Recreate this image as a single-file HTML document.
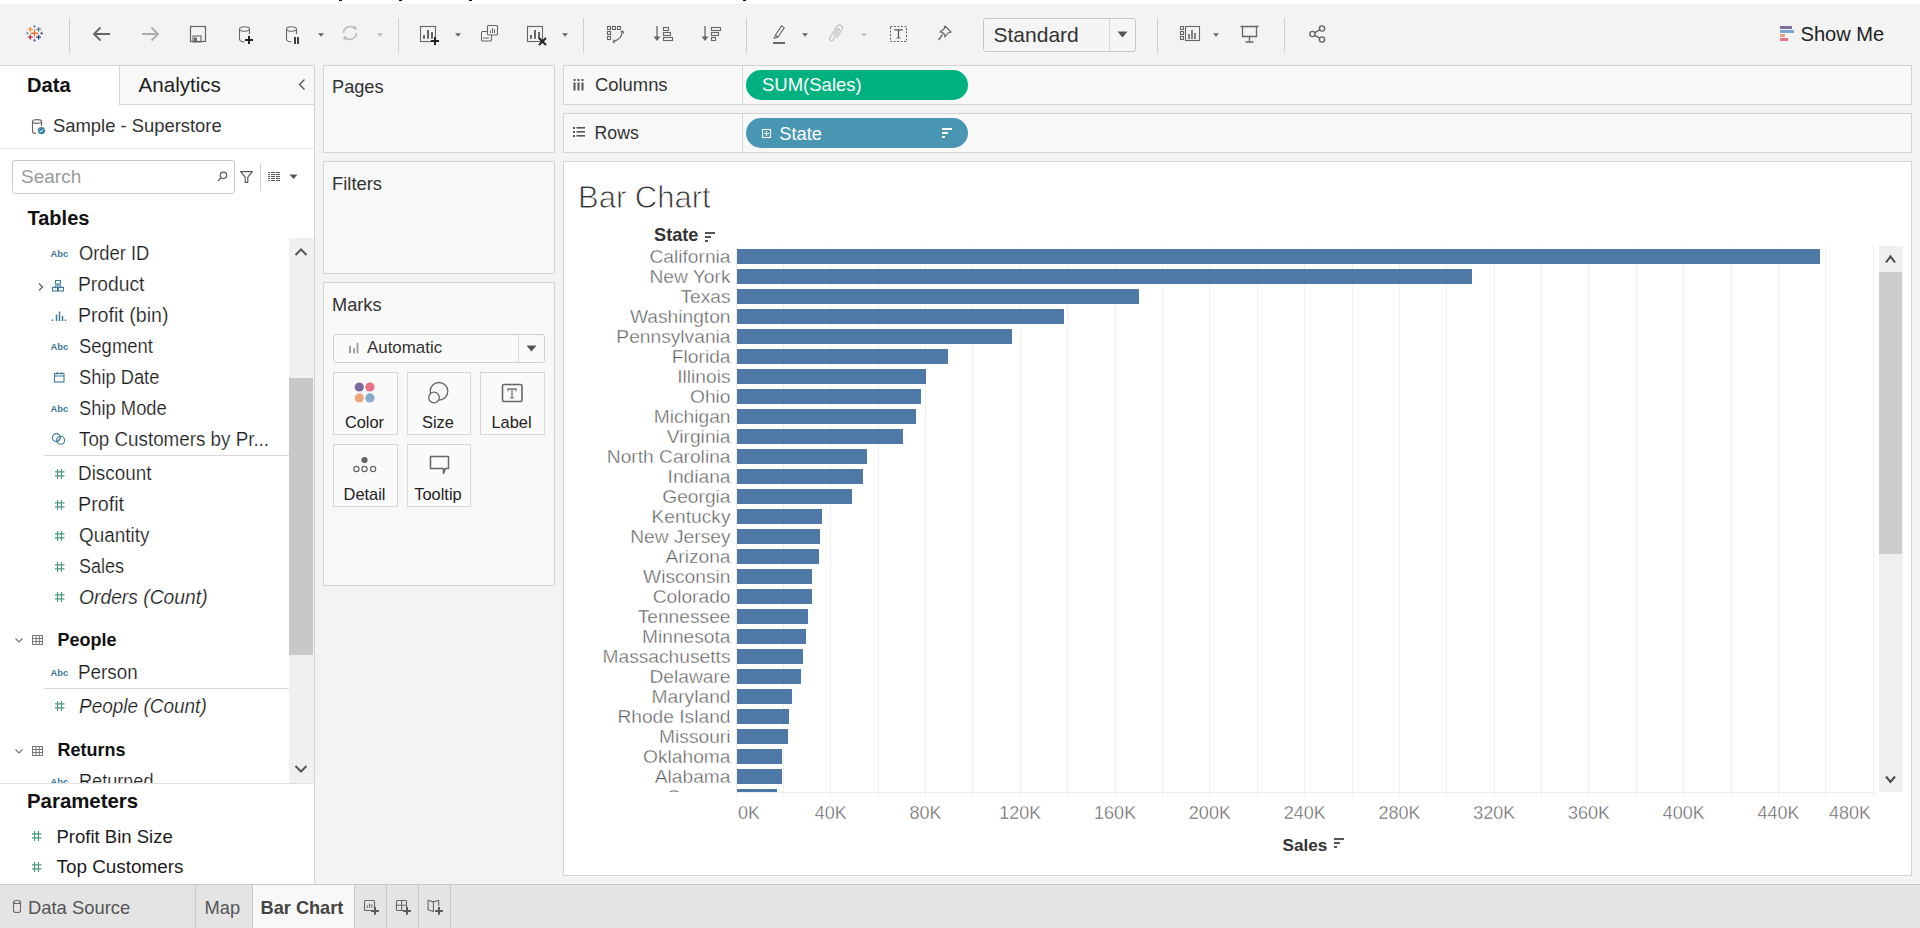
<!DOCTYPE html><html><head><meta charset="utf-8"><style>
html,body{margin:0;padding:0}
body{width:1920px;height:928px;position:relative;overflow:hidden;background:#f3f3f3;font-family:"Liberation Sans",sans-serif}
.t{position:absolute;white-space:nowrap;line-height:1;}
.r{position:absolute;box-sizing:border-box}
.s{position:absolute;overflow:visible}
</style></head><body>
<div class="r" style="left:0px;top:0px;width:1920px;height:4px;background:#fff"></div>
<div class="r" style="left:339px;top:0px;width:3px;height:1px;background:#111"></div>
<div class="r" style="left:399px;top:0px;width:3px;height:1px;background:#111"></div>
<div class="r" style="left:469px;top:0px;width:3px;height:1px;background:#111"></div>
<div class="r" style="left:743px;top:0px;width:3px;height:1px;background:#111"></div>
<div class="r" style="left:69px;top:18px;width:1px;height:35px;background:#cfcfcf"></div>
<div class="r" style="left:398px;top:18px;width:1px;height:35px;background:#cfcfcf"></div>
<div class="r" style="left:583px;top:18px;width:1px;height:35px;background:#cfcfcf"></div>
<div class="r" style="left:746px;top:18px;width:1px;height:35px;background:#cfcfcf"></div>
<div class="r" style="left:1157px;top:18px;width:1px;height:35px;background:#cfcfcf"></div>
<div class="r" style="left:1284px;top:18px;width:1px;height:35px;background:#cfcfcf"></div>
<svg class="s" style="left:0px;top:0px;" width="70" height="65" viewBox="0 0 70 65"><path d="M30.9 33.2H38.1M34.5 29.6V36.800000000000004" stroke="#e8762b" stroke-width="1.35"/><path d="M27.900000000000002 29.3H32.7M30.3 26.900000000000002V31.7" stroke="#f28e2b" stroke-width="1.2"/><path d="M36.2 29.3H41.0M38.6 26.900000000000002V31.7" stroke="#5b879b" stroke-width="1.2"/><path d="M27.900000000000002 37.2H32.7M30.3 34.800000000000004V39.6" stroke="#c72035" stroke-width="1.2"/><path d="M36.2 37.2H41.0M38.6 34.800000000000004V39.6" stroke="#1f447e" stroke-width="1.2"/><path d="M33.0 26.3H36.0M34.5 24.8V27.8" stroke="#7099a6" stroke-width="1.0"/><path d="M25.9 33.2H28.9M27.4 31.700000000000003V34.7" stroke="#7e9fb0" stroke-width="1.0"/><path d="M40.1 33.2H43.1M41.6 31.700000000000003V34.7" stroke="#59578e" stroke-width="1.0"/><path d="M33.0 40.3H36.0M34.5 38.8V41.8" stroke="#7c6f9a" stroke-width="1.0"/></svg>
<svg class="s" style="left:90px;top:24px;" width="24" height="20" viewBox="0 0 24 20"><path d="M4 10H20M10.5 3.5L4 10L10.5 16.5" fill="none" stroke="#666" stroke-width="1.8"/></svg>
<svg class="s" style="left:138px;top:24px;" width="24" height="20" viewBox="0 0 24 20"><path d="M4 10H20M13.5 3.5L20 10L13.5 16.5" fill="none" stroke="#aaa" stroke-width="1.8"/></svg>
<svg class="s" style="left:188px;top:24px;" width="20" height="20" viewBox="0 0 20 20"><rect x="2.5" y="2.5" width="15" height="15" fill="none" stroke="#666" stroke-width="1.2"/><rect x="5" y="12" width="8" height="6" fill="none" stroke="#666" stroke-width="1.1"/><rect x="6" y="13.6" width="3" height="4" fill="#666"/></svg>
<svg class="s" style="left:236px;top:22px;" width="24" height="24" viewBox="0 0 24 24"><path d="M3.5 7C3.5 4 13.5 4 13.5 7C13.5 10 3.5 10 3.5 7V17C3.5 19 6.5 20 8.5 20M13.5 7V12" fill="none" stroke="#666" stroke-width="1.1"/><path d="M9 18H17M13 14V22" stroke="#222" stroke-width="2"/></svg>
<svg class="s" style="left:283px;top:22px;" width="24" height="24" viewBox="0 0 24 24"><path d="M3.5 7C3.5 4 13.5 4 13.5 7C13.5 10 3.5 10 3.5 7V17C3.5 19 6.5 20 8.5 20M13.5 7V12" fill="none" stroke="#666" stroke-width="1.1"/><path d="M12 15V22M15 15V22" stroke="#222" stroke-width="1.7"/></svg>
<svg class="s" style="left:317.4px;top:32.2px;" width="8" height="6" viewBox="0 0 8 6"><path d="M1.0 1.2H7.0L4 4.8Z" fill="#666"/></svg>
<svg class="s" style="left:339px;top:22px;" width="22" height="22" viewBox="0 0 22 22"><path d="M4.5 11A6.5 6.5 0 0 1 16 7M17.5 11A6.5 6.5 0 0 1 6 15" fill="none" stroke="#bbb" stroke-width="1.4"/><path d="M13.5 4.5L17.5 4.5L17 8.5Z M8.5 17.5L4.5 17.5L5 13.5Z" fill="#bbb"/></svg>
<svg class="s" style="left:376.4px;top:32.2px;" width="8" height="6" viewBox="0 0 8 6"><path d="M1.0 1.2H7.0L4 4.8Z" fill="#bbb"/></svg>
<svg class="s" style="left:416px;top:22px;" width="26" height="26" viewBox="0 0 26 26"><rect x="4.5" y="4.5" width="15" height="15" fill="none" stroke="#666" stroke-width="1.1"/><path d="M8 16.7V13M12 16.7V8M16 16.7V10" stroke="#666" stroke-width="2"/><path d="M15 19H23M19 15V23" stroke="#222" stroke-width="2"/></svg>
<svg class="s" style="left:454.3px;top:32.2px;" width="8" height="6" viewBox="0 0 8 6"><path d="M1.0 1.2H7.0L4 4.8Z" fill="#666"/></svg>
<svg class="s" style="left:478px;top:20px;" width="24" height="24" viewBox="0 0 24 24"><rect x="3.5" y="11.5" width="10" height="9.5" rx="1" fill="none" stroke="#666" stroke-width="1.1"/><rect x="9.5" y="5.5" width="10" height="9.5" rx="1" fill="#f3f3f3" stroke="#666" stroke-width="1.1"/><path d="M12.5 13V10.5M14.5 13V8M16.5 13V9.5M6 19V17M8 19V17M10 19V17" stroke="#666" stroke-width="1"/></svg>
<svg class="s" style="left:523px;top:22px;" width="26" height="26" viewBox="0 0 26 26"><rect x="4.5" y="4.5" width="15" height="15" fill="none" stroke="#666" stroke-width="1.1"/><path d="M8 16.7V13M12 16.7V8M16 16.7V10" stroke="#666" stroke-width="2"/><path d="M16 16L23 23M23 16L16 23" stroke="#222" stroke-width="2"/></svg>
<svg class="s" style="left:561px;top:32.2px;" width="8" height="6" viewBox="0 0 8 6"><path d="M1.0 1.2H7.0L4 4.8Z" fill="#666"/></svg>
<svg class="s" style="left:604px;top:24px;" width="24" height="22" viewBox="0 0 24 22"><g fill="none" stroke="#666" stroke-width="1.1"><rect x="3.5" y="2.5" width="3" height="3"/><rect x="8.5" y="2.5" width="3" height="3"/><rect x="13.5" y="2.5" width="3" height="3"/><rect x="3.5" y="7.5" width="3" height="3"/><rect x="3.5" y="12.5" width="3" height="3"/><path d="M18 8C18 13 15 16 9 17.5"/></g><path d="M16 7L19.5 6.5L20 10Z M10 15L8.5 18L11 19.5Z" fill="#666"/></svg>
<svg class="s" style="left:652px;top:24px;" width="24" height="20" viewBox="0 0 24 20"><path d="M5 2V15" stroke="#666" stroke-width="1.3"/><path d="M1.5 12.5L5 17L8.5 12.5Z" fill="#666"/><g fill="none" stroke="#666" stroke-width="1.1"><rect x="11.5" y="3.5" width="5" height="3"/><rect x="11.5" y="8.5" width="7" height="3"/><rect x="11.5" y="13.5" width="9" height="3"/></g></svg>
<svg class="s" style="left:700px;top:24px;" width="24" height="20" viewBox="0 0 24 20"><path d="M5 2V15" stroke="#666" stroke-width="1.3"/><path d="M1.5 12.5L5 17L8.5 12.5Z" fill="#666"/><g fill="none" stroke="#666" stroke-width="1.1"><rect x="11.5" y="3.5" width="9" height="3"/><rect x="11.5" y="8.5" width="7" height="3"/><rect x="11.5" y="13.5" width="4" height="3"/></g></svg>
<svg class="s" style="left:770px;top:22px;" width="20" height="24" viewBox="0 0 20 24"><path d="M11.6 3.9L14.3 5.6L8 15L5.3 13.3Z" fill="none" stroke="#666" stroke-width="1.1" stroke-linejoin="round"/><path d="M5.3 13.3L4 16.5L8 15" fill="none" stroke="#666" stroke-width="1"/><path d="M3 21H15" stroke="#666" stroke-width="2"/></svg>
<svg class="s" style="left:800.5px;top:32.2px;" width="8" height="6" viewBox="0 0 8 6"><path d="M1.0 1.2H7.0L4 4.8Z" fill="#666"/></svg>
<svg class="s" style="left:827px;top:22px;" width="20" height="24" viewBox="0 0 20 24"><g transform="rotate(-58 9 11.5)" fill="none" stroke="#bdbdbd" stroke-width="1.1"><path d="M6 14.5H15.5A3 3 0 0 0 15.5 8.5H2.5A2 2 0 0 0 2.5 12.5H13.5A1 1 0 0 0 13.5 10.5H6"/></g></svg>
<svg class="s" style="left:860.3px;top:32.2px;" width="8" height="6" viewBox="0 0 8 6"><path d="M1.0 1.2H7.0L4 4.8Z" fill="#c0c0c0"/></svg>
<svg class="s" style="left:887px;top:23px;" width="24" height="22" viewBox="0 0 24 22"><rect x="3.5" y="3.5" width="16" height="15" fill="none" stroke="#666" stroke-width="1" stroke-dasharray="2 1.5"/><path d="M7.8 7.5V6.8H15.2V7.5M11.5 6.8V15M9.6 15H13.4" fill="none" stroke="#555" stroke-width="1.2"/></svg>
<svg class="s" style="left:935px;top:22px;" width="20" height="22" viewBox="0 0 20 22"><path d="M10 4L16 10L13 11L10 15L9.5 12.5L7.5 10.5L5 10L9 7Z" fill="none" stroke="#666" stroke-width="1.2" stroke-linejoin="round"/><path d="M7.5 12.5L3.5 18" stroke="#666" stroke-width="1.3"/></svg>
<div class="r" style="left:983px;top:18px;width:153px;height:34px;background:#f5f5f5;border:1px solid #c8c8c8;border-radius:3px"></div>
<div class="r" style="left:1109px;top:19px;width:1px;height:32px;background:#d8d8d8"></div>
<svg class="s" style="left:1116px;top:31px;" width="14" height="8" viewBox="0 0 14 8"><path d="M1.5 0.5H11.5L6.5 6.5Z" fill="#555"/></svg>
<div class="t" style="left:993.50px;top:24.22px;font-size:21px;color:#333;font-weight:400;font-style:normal;">Standard</div>
<svg class="s" style="left:1177px;top:24px;" width="26" height="20" viewBox="0 0 26 20"><g fill="none" stroke="#666" stroke-width="1.1"><rect x="3.5" y="2.5" width="3" height="3"/><rect x="3.5" y="7.5" width="3" height="3"/><rect x="3.5" y="12.5" width="3" height="3"/><rect x="8.5" y="2.5" width="14" height="14"/></g><path d="M12 15V10M15 15V6M18 15V9" stroke="#666" stroke-width="1.6"/></svg>
<svg class="s" style="left:1211.5px;top:32.2px;" width="8" height="6" viewBox="0 0 8 6"><path d="M1.0 1.2H7.0L4 4.8Z" fill="#666"/></svg>
<svg class="s" style="left:1238px;top:23px;" width="24" height="22" viewBox="0 0 24 22"><path d="M2.5 3.5H20.5M4.5 3.5V13.5H18.5V3.5M11.5 13.5V19M7.5 19H15.5" fill="none" stroke="#666" stroke-width="1.3"/></svg>
<svg class="s" style="left:1307px;top:23px;" width="22" height="22" viewBox="0 0 22 22"><g fill="none" stroke="#666" stroke-width="1.4"><circle cx="5.5" cy="11" r="2.6"/><circle cx="15" cy="5.5" r="2.6"/><circle cx="15" cy="16.5" r="2.6"/><path d="M7.8 9.6L12.7 6.9M7.8 12.4L12.7 15.1"/></g></svg>
<div class="r" style="left:1780px;top:26px;width:12px;height:3px;background:#7f6e9a"></div>
<div class="r" style="left:1780px;top:30px;width:14px;height:3px;background:#7aa6d0"></div>
<div class="r" style="left:1780px;top:34px;width:5px;height:3px;background:#eda27a"></div>
<div class="r" style="left:1780px;top:38px;width:8px;height:3px;background:#e9707f"></div>
<div class="t" style="left:1800.50px;top:24.29px;font-size:20.1px;color:#222;font-weight:400;font-style:normal;">Show Me</div>
<div class="r" style="left:0px;top:65px;width:315px;height:820px;background:#fff;border-top:1px solid #d4d4d4;border-right:1px solid #d4d4d4"></div>
<div class="r" style="left:119px;top:65px;width:196px;height:40px;background:#f8f8f8;border-left:1px solid #d4d4d4;border-bottom:1px solid #d4d4d4;border-top:1px solid #d4d4d4;border-right:1px solid #d4d4d4"></div>
<div class="t" style="left:27.00px;top:74.99px;font-size:20.1px;color:#111;font-weight:700;font-style:normal;">Data</div>
<div class="t" style="left:138.50px;top:74.56px;font-size:20.6px;color:#222;font-weight:400;font-style:normal;">Analytics</div>
<svg class="s" style="left:296px;top:78px;" width="12" height="14" viewBox="0 0 12 14"><path d="M8.5 1.5L3.5 6.5L8.5 11.5" fill="none" stroke="#555" stroke-width="1.4"/></svg>
<svg class="s" style="left:30px;top:117px;" width="20" height="20" viewBox="0 0 20 20"><path d="M2.5 4.5C2.5 2 11.5 2 11.5 4.5C11.5 7 2.5 7 2.5 4.5V14.5C2.5 16 4 16.5 6 16.5M11.5 4.5V9" fill="none" stroke="#666" stroke-width="1.1"/><circle cx="11.5" cy="13.6" r="3.7" fill="#3e86a8"/><path d="M9.7 13.6L11 14.9L13.4 12.4" fill="none" stroke="#fff" stroke-width="1"/></svg>
<div class="t" style="left:53.00px;top:116.82px;font-size:18.4px;color:#333;font-weight:400;font-style:normal;">Sample - Superstore</div>
<div class="r" style="left:0px;top:148px;width:314px;height:1px;background:#e6e6e6"></div>
<div class="r" style="left:12px;top:160px;width:223px;height:34px;background:#fff;border:1px solid #c9c9c9;border-radius:3px"></div>
<div class="t" style="left:21.00px;top:166.92px;font-size:19px;color:#9a9a9a;font-weight:400;font-style:normal;">Search</div>
<svg class="s" style="left:214px;top:170px;" width="16" height="16" viewBox="0 0 16 16"><circle cx="9.4" cy="5.3" r="3.2" fill="none" stroke="#555" stroke-width="1.2"/><path d="M7.2 7.6L4.2 10.6" stroke="#555" stroke-width="1.3" stroke-linecap="round"/></svg>
<svg class="s" style="left:238px;top:168px;" width="18" height="18" viewBox="0 0 18 18"><path d="M2.6 3.6H14.4L9.8 9.2V14.4H7.2V9.2Z" fill="none" stroke="#555" stroke-width="1.1" stroke-linejoin="round"/></svg>
<div class="r" style="left:260px;top:163px;width:1px;height:28px;background:#d4d4d4"></div>
<svg class="s" style="left:266px;top:170px;" width="18" height="14" viewBox="0 0 18 14"><g fill="#5a5a5a"><rect x="2" y="2" width="2" height="1"/><rect x="5" y="2" width="4" height="1"/><rect x="10" y="2" width="4" height="1"/><rect x="2" y="4" width="2" height="1"/><rect x="5" y="4" width="4" height="1"/><rect x="10" y="4" width="4" height="1"/><rect x="2" y="6" width="2" height="1"/><rect x="5" y="6" width="4" height="1"/><rect x="10" y="6" width="4" height="1"/><rect x="2" y="8" width="2" height="1"/><rect x="5" y="8" width="4" height="1"/><rect x="10" y="8" width="4" height="1"/><rect x="2" y="10" width="2" height="1"/><rect x="5" y="10" width="4" height="1"/><rect x="10" y="10" width="4" height="1"/></g></svg>
<svg class="s" style="left:289px;top:174px;" width="10" height="6" viewBox="0 0 10 6"><path d="M0.5 0.5H8.5L4.5 5Z" fill="#555"/></svg>
<div class="t" style="left:27.50px;top:208.07px;font-size:20px;color:#111;font-weight:700;font-style:normal;">Tables</div>
<div style="position:absolute;left:0;top:238px;width:289px;height:545px;overflow:hidden">
<div class="t" style="left:50.5px;top:11.04px;font-size:9.4px;font-weight:700;color:#3f7b99">Abc</div>
<div class="t" style="left:78.87px;top:6.09px;font-size:19.5px;color:#1c1c1c;font-style:normal;transform:scaleX(0.9405);transform-origin:0 0;-webkit-text-stroke:0.2px #fff">Order ID</div>
<svg class="s" style="left:36px;top:41.69999999999999px;" width="30" height="14" viewBox="0 0 30 14"><path d="M3 3.5L6.5 7L3 10.5" fill="none" stroke="#666" stroke-width="1.3"/><g fill="none" stroke="#3f7b99" stroke-width="1.1"><rect x="19.5" y="0.5" width="5" height="3.5"/><rect x="16.5" y="7.5" width="5" height="3.5"/><rect x="22.5" y="7.5" width="5" height="3.5"/><path d="M22 4V6H19V7.5M22 6H25V7.5"/></g></svg>
<div class="t" style="left:78.16px;top:37.09px;font-size:19.5px;color:#1c1c1c;font-style:normal;transform:scaleX(0.9877);transform-origin:0 0;-webkit-text-stroke:0.2px #fff">Product</div>
<svg class="s" style="left:50px;top:71.69999999999999px;" width="18" height="12" viewBox="0 0 18 12"><path d="M2.5 11V9.5M6.5 11V4.5M9.5 11V1.5M12.5 11V6M15.5 11V9.5" stroke="#3f7b99" stroke-width="1.5"/></svg>
<div class="t" style="left:78.13px;top:68.09px;font-size:19.5px;color:#1c1c1c;font-style:normal;transform:scaleX(1.0062);transform-origin:0 0;-webkit-text-stroke:0.2px #fff">Profit (bin)</div>
<div class="t" style="left:50.5px;top:104.04px;font-size:9.4px;font-weight:700;color:#3f7b99">Abc</div>
<div class="t" style="left:78.87px;top:99.09px;font-size:19.5px;color:#1c1c1c;font-style:normal;transform:scaleX(0.9477);transform-origin:0 0;-webkit-text-stroke:0.2px #fff">Segment</div>
<svg class="s" style="left:52px;top:132.7px;" width="14" height="12" viewBox="0 0 14 12"><rect x="2.5" y="2.5" width="9.5" height="8.5" fill="none" stroke="#3f7b99" stroke-width="1.1"/><path d="M2.5 5H12M5 1V3.5M9.5 1V3.5" stroke="#3f7b99" stroke-width="1.1"/></svg>
<div class="t" style="left:78.88px;top:130.09px;font-size:19.5px;color:#1c1c1c;font-style:normal;transform:scaleX(0.9385);transform-origin:0 0;-webkit-text-stroke:0.2px #fff">Ship Date</div>
<div class="t" style="left:50.5px;top:166.04px;font-size:9.4px;font-weight:700;color:#3f7b99">Abc</div>
<div class="t" style="left:78.87px;top:161.09px;font-size:19.5px;color:#1c1c1c;font-style:normal;transform:scaleX(0.9415);transform-origin:0 0;-webkit-text-stroke:0.2px #fff">Ship Mode</div>
<svg class="s" style="left:50px;top:193.7px;" width="16" height="14" viewBox="0 0 16 14"><circle cx="6.4" cy="5.6" r="4" fill="none" stroke="#3f7b99" stroke-width="1.1"/><circle cx="10.6" cy="8.3" r="4" fill="none" stroke="#3f7b99" stroke-width="1.1"/><path d="M7.5 9.5L10 5.5" stroke="#3f7b99" stroke-width="1.6" opacity=".5"/></svg>
<div class="t" style="left:79.23px;top:192.09px;font-size:19.5px;color:#1c1c1c;font-style:normal;transform:scaleX(0.9636);transform-origin:0 0;-webkit-text-stroke:0.2px #fff">Top Customers by Pr...</div>
<div class="r" style="left:44px;top:217px;width:245px;height:1px;background:#d9d9d9"></div>
<svg class="s" style="left:53.5px;top:229.60000000000002px;" width="12" height="12" viewBox="0 0 12 12"><path d="M3.6 1V11M7.4 1V11M1 3.8H10.5M1 7.8H10.5" stroke="#4b9a7c" stroke-width="1.15"/></svg>
<div class="t" style="left:78.19px;top:226.49px;font-size:19.5px;color:#1c1c1c;font-style:normal;transform:scaleX(0.9677);transform-origin:0 0;-webkit-text-stroke:0.2px #fff">Discount</div>
<svg class="s" style="left:53.5px;top:260.5px;" width="12" height="12" viewBox="0 0 12 12"><path d="M3.6 1V11M7.4 1V11M1 3.8H10.5M1 7.8H10.5" stroke="#4b9a7c" stroke-width="1.15"/></svg>
<div class="t" style="left:78.12px;top:257.39px;font-size:19.5px;color:#1c1c1c;font-style:normal;transform:scaleX(1.0118);transform-origin:0 0;-webkit-text-stroke:0.2px #fff">Profit</div>
<svg class="s" style="left:53.5px;top:291.5px;" width="12" height="12" viewBox="0 0 12 12"><path d="M3.6 1V11M7.4 1V11M1 3.8H10.5M1 7.8H10.5" stroke="#4b9a7c" stroke-width="1.15"/></svg>
<div class="t" style="left:78.85px;top:288.39px;font-size:19.5px;color:#1c1c1c;font-style:normal;transform:scaleX(0.9697);transform-origin:0 0;-webkit-text-stroke:0.2px #fff">Quantity</div>
<svg class="s" style="left:53.5px;top:322.5px;" width="12" height="12" viewBox="0 0 12 12"><path d="M3.6 1V11M7.4 1V11M1 3.8H10.5M1 7.8H10.5" stroke="#4b9a7c" stroke-width="1.15"/></svg>
<div class="t" style="left:78.89px;top:319.39px;font-size:19.5px;color:#1c1c1c;font-style:normal;transform:scaleX(0.9221);transform-origin:0 0;-webkit-text-stroke:0.2px #fff">Sales</div>
<svg class="s" style="left:53.5px;top:353.1px;" width="12" height="12" viewBox="0 0 12 12"><path d="M3.6 1V11M7.4 1V11M1 3.8H10.5M1 7.8H10.5" stroke="#4b9a7c" stroke-width="1.15"/></svg>
<div class="t" style="left:78.64px;top:349.99px;font-size:19.5px;color:#1c1c1c;font-style:italic;transform:scaleX(0.9887);transform-origin:0 0;-webkit-text-stroke:0.2px #fff">Orders (Count)</div>
<svg class="s" style="left:12px;top:396.4px;" width="34" height="14" viewBox="0 0 34 14"><path d="M3.5 4.5L7 8L10.5 4.5" fill="none" stroke="#777" stroke-width="1.2"/><g fill="none" stroke="#777" stroke-width="1"><rect x="20.5" y="1.5" width="10" height="9"/><path d="M20.5 4.5H30.5M20.5 7.5H30.5M24 1.5V10.5M27.3 1.5V10.5"/></g></svg>
<div class="t" style="left:57.5px;top:393.16px;font-size:18px;color:#111;font-weight:700">People</div>
<div class="t" style="left:50.5px;top:430.04px;font-size:9.4px;font-weight:700;color:#3f7b99">Abc</div>
<div class="t" style="left:78.19px;top:425.19px;font-size:19.5px;color:#1c1c1c;font-style:normal;transform:scaleX(0.9662);transform-origin:0 0;-webkit-text-stroke:0.2px #fff">Person</div>
<div class="r" style="left:44px;top:450px;width:245px;height:1px;background:#d9d9d9"></div>
<svg class="s" style="left:53.5px;top:462.20000000000005px;" width="12" height="12" viewBox="0 0 12 12"><path d="M3.6 1V11M7.4 1V11M1 3.8H10.5M1 7.8H10.5" stroke="#4b9a7c" stroke-width="1.15"/></svg>
<div class="t" style="left:79.13px;top:459.09px;font-size:19.5px;color:#1c1c1c;font-style:italic;transform:scaleX(0.9738);transform-origin:0 0;-webkit-text-stroke:0.2px #fff">People (Count)</div>
<svg class="s" style="left:12px;top:506.5px;" width="34" height="14" viewBox="0 0 34 14"><path d="M3.5 4.5L7 8L10.5 4.5" fill="none" stroke="#777" stroke-width="1.2"/><g fill="none" stroke="#777" stroke-width="1"><rect x="20.5" y="1.5" width="10" height="9"/><path d="M20.5 4.5H30.5M20.5 7.5H30.5M24 1.5V10.5M27.3 1.5V10.5"/></g></svg>
<div class="t" style="left:57.5px;top:503.26px;font-size:18px;color:#111;font-weight:700">Returns</div>
<div class="t" style="left:50.5px;top:539.04px;font-size:9.4px;font-weight:700;color:#3f7b99">Abc</div>
<div class="t" style="left:78.7px;top:533.89px;font-size:19.5px;color:#1c1c1c;font-style:normal;transform:scaleX(0.9282);transform-origin:0 0;-webkit-text-stroke:0.2px #fff">Returned</div>
</div>
<div class="r" style="left:289px;top:238px;width:25px;height:545px;background:#f0f0f0"></div>
<div class="r" style="left:289px;top:378px;width:24px;height:277px;background:#c8c8c8"></div>
<svg class="s" style="left:292px;top:246px;" width="18" height="12" viewBox="0 0 18 12"><path d="M3.5 9L9 3.5L14.5 9" fill="none" stroke="#555" stroke-width="2"/></svg>
<svg class="s" style="left:292px;top:763px;" width="18" height="12" viewBox="0 0 18 12"><path d="M3.5 3L9 8.5L14.5 3" fill="none" stroke="#555" stroke-width="2"/></svg>
<div class="r" style="left:0px;top:783px;width:314px;height:1px;background:#e0e0e0"></div>
<div class="t" style="left:27.00px;top:791.23px;font-size:20.4px;color:#111;font-weight:700;font-style:normal;">Parameters</div>
<svg class="s" style="left:30px;top:829px;" width="14" height="14" viewBox="0 0 14 14"><path d="M4.6 2V12M8.4 2V12M2 4.8H11.5M2 8.8H11.5" stroke="#4b9a7c" stroke-width="1.15"/></svg>
<div class="t" style="left:56.50px;top:827.84px;font-size:18.5px;color:#1c1c1c;font-weight:400;font-style:normal;">Profit Bin Size</div>
<svg class="s" style="left:30px;top:860px;" width="14" height="14" viewBox="0 0 14 14"><path d="M4.6 2V12M8.4 2V12M2 4.8H11.5M2 8.8H11.5" stroke="#4b9a7c" stroke-width="1.15"/></svg>
<div class="t" style="left:56.50px;top:858.00px;font-size:18.9px;color:#1c1c1c;font-weight:400;font-style:normal;">Top Customers</div>
<div class="r" style="left:323px;top:65px;width:232px;height:88px;background:#f8f8f8;border:1px solid #d4d4d4"></div>
<div class="t" style="left:332.00px;top:78.39px;font-size:18.2px;color:#333;font-weight:400;font-style:normal;">Pages</div>
<div class="r" style="left:323px;top:161px;width:232px;height:113px;background:#f8f8f8;border:1px solid #d4d4d4"></div>
<div class="t" style="left:332.00px;top:174.72px;font-size:18.4px;color:#333;font-weight:400;font-style:normal;">Filters</div>
<div class="r" style="left:323px;top:282px;width:232px;height:304px;background:#f8f8f8;border:1px solid #d4d4d4"></div>
<div class="t" style="left:332.00px;top:295.79px;font-size:18.2px;color:#333;font-weight:400;font-style:normal;">Marks</div>
<div class="r" style="left:333px;top:334px;width:212px;height:29px;background:#fafafa;border:1px solid #cfcfcf;border-radius:3px"></div>
<div class="r" style="left:518px;top:335px;width:1px;height:27px;background:#dcdcdc"></div>
<svg class="s" style="left:525px;top:345px;" width="14" height="8" viewBox="0 0 14 8"><path d="M1.5 0.5H11.5L6.5 6.5Z" fill="#555"/></svg>
<svg class="s" style="left:346px;top:340px;" width="16" height="16" viewBox="0 0 16 16"><path d="M4 12.5V6.5M8 12.5V9M11.5 12.5V3.8" stroke="#a0a0a0" stroke-width="2" stroke-linecap="round"/></svg>
<div class="t" style="left:367.00px;top:339.79px;font-size:16.9px;color:#333;font-weight:400;font-style:normal;">Automatic</div>
<div class="r" style="left:333px;top:372px;width:65px;height:63px;background:#fafafa;border:1px solid #d6d6d6"></div>
<div class="t" style="left:164.50px;width:400px;text-align:center;top:413.62px;font-size:16.4px;color:#222;font-weight:400;font-style:normal;">Color</div>
<svg class="s" style="left:333px;top:372px;" width="65" height="40" viewBox="0 0 65 40"><circle cx="26.3" cy="15" r="4.6" fill="#7b6b9d"/><circle cx="36.9" cy="15" r="4.6" fill="#eb6f80"/><circle cx="26.3" cy="25.9" r="4.6" fill="#eea57b"/><circle cx="36.9" cy="25.9" r="4.6" fill="#86a9cd"/></svg>
<div class="r" style="left:407px;top:372px;width:64px;height:63px;background:#fafafa;border:1px solid #d6d6d6"></div>
<div class="t" style="left:238.00px;width:400px;text-align:center;top:413.62px;font-size:16.4px;color:#222;font-weight:400;font-style:normal;">Size</div>
<svg class="s" style="left:407px;top:372px;" width="65" height="40" viewBox="0 0 65 40"><circle cx="32" cy="19.3" r="8.8" fill="none" stroke="#666" stroke-width="1.3"/><circle cx="27" cy="25.5" r="5.3" fill="#fafafa" stroke="#666" stroke-width="1.3"/></svg>
<div class="r" style="left:480px;top:372px;width:65px;height:63px;background:#fafafa;border:1px solid #d6d6d6"></div>
<div class="t" style="left:311.50px;width:400px;text-align:center;top:413.62px;font-size:16.4px;color:#222;font-weight:400;font-style:normal;">Label</div>
<svg class="s" style="left:480px;top:372px;" width="65" height="40" viewBox="0 0 65 40"><rect x="22.5" y="12.5" width="19.5" height="17" rx="1.5" fill="none" stroke="#666" stroke-width="1.6"/><path d="M28 19.2V17H36V19.2M32 17V25.8M30.2 25.8H33.8" fill="none" stroke="#7a7a7a" stroke-width="1.3"/></svg>
<div class="r" style="left:333px;top:444px;width:65px;height:63px;background:#fafafa;border:1px solid #d6d6d6"></div>
<div class="t" style="left:164.50px;width:400px;text-align:center;top:485.62px;font-size:16.4px;color:#222;font-weight:400;font-style:normal;">Detail</div>
<svg class="s" style="left:333px;top:444px;" width="65" height="40" viewBox="0 0 65 40"><circle cx="31.5" cy="16" r="3.1" fill="#666"/><g fill="none" stroke="#666" stroke-width="1.2"><circle cx="23.4" cy="25" r="2.6"/><circle cx="31.5" cy="25" r="2.6"/><circle cx="40.1" cy="25" r="2.6"/></g></svg>
<div class="r" style="left:407px;top:444px;width:64px;height:63px;background:#fafafa;border:1px solid #d6d6d6"></div>
<div class="t" style="left:238.00px;width:400px;text-align:center;top:485.62px;font-size:16.4px;color:#222;font-weight:400;font-style:normal;">Tooltip</div>
<svg class="s" style="left:407px;top:444px;" width="65" height="40" viewBox="0 0 65 40"><path d="M23.5 12.5H41.5V24.5H38.5L36.5 29.5V24.5H23.5Z" fill="none" stroke="#666" stroke-width="1.5" stroke-linejoin="round"/></svg>
<div class="r" style="left:563px;top:65px;width:1349px;height:40px;background:#f8f8f8;border:1px solid #d4d4d4"></div>
<div class="r" style="left:742px;top:66px;width:1px;height:38px;background:#d4d4d4"></div>
<svg class="s" style="left:570px;top:76px;" width="18" height="18" viewBox="0 0 18 18"><g fill="#555"><rect x="3.5" y="3" width="2" height="2"/><rect x="7.5" y="3" width="2" height="2"/><rect x="11.5" y="3" width="2" height="2"/><rect x="3.5" y="6.5" width="2" height="8"/><rect x="7.5" y="6.5" width="2" height="8"/><rect x="11.5" y="6.5" width="2" height="8"/></g></svg>
<div class="t" style="left:595.00px;top:76.42px;font-size:18.4px;color:#333;font-weight:400;font-style:normal;">Columns</div>
<div class="r" style="left:746px;top:70px;width:222px;height:30px;background:#00b180;border-radius:15px"></div>
<div class="t" style="left:762.00px;top:76.34px;font-size:18.5px;color:#fff;font-weight:400;font-style:normal;">SUM(Sales)</div>
<div class="r" style="left:563px;top:113px;width:1349px;height:40px;background:#f8f8f8;border:1px solid #d4d4d4"></div>
<div class="r" style="left:742px;top:114px;width:1px;height:38px;background:#d4d4d4"></div>
<svg class="s" style="left:570px;top:124px;" width="18" height="18" viewBox="0 0 18 18"><g fill="#555"><rect x="3" y="3" width="2" height="2"/><rect x="3" y="7" width="2" height="2"/><rect x="3" y="11" width="2" height="2"/><rect x="6.5" y="3" width="8.5" height="1.6"/><rect x="6.5" y="7" width="8.5" height="1.6"/><rect x="6.5" y="11" width="8.5" height="1.6"/></g></svg>
<div class="t" style="left:594.60px;top:125.12px;font-size:17.7px;color:#333;font-weight:400;font-style:normal;">Rows</div>
<div class="r" style="left:746px;top:118px;width:222px;height:30px;background:#4996b2;border-radius:15px"></div>
<svg class="s" style="left:758px;top:125px;" width="16" height="16" viewBox="0 0 16 16"><rect x="4.5" y="4.5" width="8" height="8" fill="none" stroke="#fff" stroke-width="1.1"/><path d="M8.5 6V11M6 8.5H11" stroke="#fff" stroke-width="1.1"/></svg>
<div class="t" style="left:779.30px;top:124.61px;font-size:18.3px;color:#fff;font-weight:400;font-style:normal;">State</div>
<div class="r" style="left:942px;top:128px;width:10px;height:2px;background:#fff"></div>
<div class="r" style="left:942px;top:132px;width:6px;height:2px;background:#fff"></div>
<div class="r" style="left:942px;top:136px;width:3px;height:2px;background:#fff"></div>
<div class="r" style="left:563px;top:161px;width:1349px;height:715px;background:#fff;border:1px solid #d4d4d4"></div>
<div class="t" style="left:578.00px;top:181.76px;font-size:31px;color:#333;font-weight:300;font-style:normal;-webkit-text-stroke:0.8px #fff;">Bar Chart</div>
<div class="t" style="left:654.00px;top:225.79px;font-size:18.2px;color:#333;font-weight:700;font-style:normal;">State</div>
<div class="r" style="left:705px;top:232px;width:10px;height:2px;background:#555"></div>
<div class="r" style="left:705px;top:236px;width:6px;height:2px;background:#555"></div>
<div class="r" style="left:705px;top:240px;width:3px;height:2px;background:#555"></div>
<div style="position:absolute;left:570px;top:246px;width:1305px;height:546px;overflow:hidden">
<div class="r" style="left:166px;top:0;width:1px;height:546px;background:#f0f0f0"></div>
<div class="r" style="left:213px;top:0;width:1px;height:546px;background:#f0f0f0"></div>
<div class="r" style="left:260px;top:0;width:1px;height:546px;background:#f0f0f0"></div>
<div class="r" style="left:308px;top:0;width:1px;height:546px;background:#f0f0f0"></div>
<div class="r" style="left:355px;top:0;width:1px;height:546px;background:#f0f0f0"></div>
<div class="r" style="left:402px;top:0;width:1px;height:546px;background:#f0f0f0"></div>
<div class="r" style="left:450px;top:0;width:1px;height:546px;background:#f0f0f0"></div>
<div class="r" style="left:497px;top:0;width:1px;height:546px;background:#f0f0f0"></div>
<div class="r" style="left:545px;top:0;width:1px;height:546px;background:#f0f0f0"></div>
<div class="r" style="left:592px;top:0;width:1px;height:546px;background:#f0f0f0"></div>
<div class="r" style="left:639px;top:0;width:1px;height:546px;background:#f0f0f0"></div>
<div class="r" style="left:687px;top:0;width:1px;height:546px;background:#f0f0f0"></div>
<div class="r" style="left:734px;top:0;width:1px;height:546px;background:#f0f0f0"></div>
<div class="r" style="left:782px;top:0;width:1px;height:546px;background:#f0f0f0"></div>
<div class="r" style="left:829px;top:0;width:1px;height:546px;background:#f0f0f0"></div>
<div class="r" style="left:876px;top:0;width:1px;height:546px;background:#f0f0f0"></div>
<div class="r" style="left:924px;top:0;width:1px;height:546px;background:#f0f0f0"></div>
<div class="r" style="left:971px;top:0;width:1px;height:546px;background:#f0f0f0"></div>
<div class="r" style="left:1018px;top:0;width:1px;height:546px;background:#f0f0f0"></div>
<div class="r" style="left:1066px;top:0;width:1px;height:546px;background:#f0f0f0"></div>
<div class="r" style="left:1113px;top:0;width:1px;height:546px;background:#f0f0f0"></div>
<div class="r" style="left:1161px;top:0;width:1px;height:546px;background:#f0f0f0"></div>
<div class="r" style="left:1208px;top:0;width:1px;height:546px;background:#f0f0f0"></div>
<div class="r" style="left:1255px;top:0;width:1px;height:546px;background:#f0f0f0"></div>
<div class="r" style="left:1303px;top:0;width:1px;height:546px;background:#f0f0f0"></div>
<div class="r" style="left:167px;top:3px;width:1082.9px;height:15px;background:#4e79a7"></div>
<div class="t" style="left:-139.5px;width:300px;text-align:right;top:0.55px;font-size:19.2px;color:#5c5c5c;-webkit-text-stroke:0.4px #fff">California</div>
<div class="r" style="left:167px;top:23px;width:735.1px;height:15px;background:#4e79a7"></div>
<div class="t" style="left:-139.5px;width:300px;text-align:right;top:20.55px;font-size:19.2px;color:#5c5c5c;-webkit-text-stroke:0.4px #fff">New York</div>
<div class="r" style="left:167px;top:43px;width:401.8px;height:15px;background:#4e79a7"></div>
<div class="t" style="left:-139.5px;width:300px;text-align:right;top:40.55px;font-size:19.2px;color:#5c5c5c;-webkit-text-stroke:0.4px #fff">Texas</div>
<div class="r" style="left:167px;top:63px;width:327.0px;height:15px;background:#4e79a7"></div>
<div class="t" style="left:-139.5px;width:300px;text-align:right;top:60.55px;font-size:19.2px;color:#5c5c5c;-webkit-text-stroke:0.4px #fff">Washington</div>
<div class="r" style="left:167px;top:83px;width:274.6px;height:15px;background:#4e79a7"></div>
<div class="t" style="left:-139.5px;width:300px;text-align:right;top:80.55px;font-size:19.2px;color:#5c5c5c;-webkit-text-stroke:0.4px #fff">Pennsylvania</div>
<div class="r" style="left:167px;top:103px;width:210.6px;height:15px;background:#4e79a7"></div>
<div class="t" style="left:-139.5px;width:300px;text-align:right;top:100.55px;font-size:19.2px;color:#5c5c5c;-webkit-text-stroke:0.4px #fff">Florida</div>
<div class="r" style="left:167px;top:123px;width:188.5px;height:15px;background:#4e79a7"></div>
<div class="t" style="left:-139.5px;width:300px;text-align:right;top:120.55px;font-size:19.2px;color:#5c5c5c;-webkit-text-stroke:0.4px #fff">Illinois</div>
<div class="r" style="left:167px;top:143px;width:184.0px;height:15px;background:#4e79a7"></div>
<div class="t" style="left:-139.5px;width:300px;text-align:right;top:140.55px;font-size:19.2px;color:#5c5c5c;-webkit-text-stroke:0.4px #fff">Ohio</div>
<div class="r" style="left:167px;top:163px;width:179.3px;height:15px;background:#4e79a7"></div>
<div class="t" style="left:-139.5px;width:300px;text-align:right;top:160.55px;font-size:19.2px;color:#5c5c5c;-webkit-text-stroke:0.4px #fff">Michigan</div>
<div class="r" style="left:167px;top:183px;width:165.9px;height:15px;background:#4e79a7"></div>
<div class="t" style="left:-139.5px;width:300px;text-align:right;top:180.55px;font-size:19.2px;color:#5c5c5c;-webkit-text-stroke:0.4px #fff">Virginia</div>
<div class="r" style="left:167px;top:203px;width:130.3px;height:15px;background:#4e79a7"></div>
<div class="t" style="left:-139.5px;width:300px;text-align:right;top:200.55px;font-size:19.2px;color:#5c5c5c;-webkit-text-stroke:0.4px #fff">North Carolina</div>
<div class="r" style="left:167px;top:223px;width:125.5px;height:15px;background:#4e79a7"></div>
<div class="t" style="left:-139.5px;width:300px;text-align:right;top:220.55px;font-size:19.2px;color:#5c5c5c;-webkit-text-stroke:0.4px #fff">Indiana</div>
<div class="r" style="left:167px;top:243px;width:114.9px;height:15px;background:#4e79a7"></div>
<div class="t" style="left:-139.5px;width:300px;text-align:right;top:240.55px;font-size:19.2px;color:#5c5c5c;-webkit-text-stroke:0.4px #fff">Georgia</div>
<div class="r" style="left:167px;top:263px;width:85.3px;height:15px;background:#4e79a7"></div>
<div class="t" style="left:-139.5px;width:300px;text-align:right;top:260.55px;font-size:19.2px;color:#5c5c5c;-webkit-text-stroke:0.4px #fff">Kentucky</div>
<div class="r" style="left:167px;top:283px;width:83.3px;height:15px;background:#4e79a7"></div>
<div class="t" style="left:-139.5px;width:300px;text-align:right;top:280.55px;font-size:19.2px;color:#5c5c5c;-webkit-text-stroke:0.4px #fff">New Jersey</div>
<div class="r" style="left:167px;top:303px;width:82.2px;height:15px;background:#4e79a7"></div>
<div class="t" style="left:-139.5px;width:300px;text-align:right;top:300.55px;font-size:19.2px;color:#5c5c5c;-webkit-text-stroke:0.4px #fff">Arizona</div>
<div class="r" style="left:167px;top:323px;width:74.7px;height:15px;background:#4e79a7"></div>
<div class="t" style="left:-139.5px;width:300px;text-align:right;top:320.55px;font-size:19.2px;color:#5c5c5c;-webkit-text-stroke:0.4px #fff">Wisconsin</div>
<div class="r" style="left:167px;top:343px;width:74.6px;height:15px;background:#4e79a7"></div>
<div class="t" style="left:-139.5px;width:300px;text-align:right;top:340.55px;font-size:19.2px;color:#5c5c5c;-webkit-text-stroke:0.4px #fff">Colorado</div>
<div class="r" style="left:167px;top:363px;width:71.2px;height:15px;background:#4e79a7"></div>
<div class="t" style="left:-139.5px;width:300px;text-align:right;top:360.55px;font-size:19.2px;color:#5c5c5c;-webkit-text-stroke:0.4px #fff">Tennessee</div>
<div class="r" style="left:167px;top:383px;width:69.3px;height:15px;background:#4e79a7"></div>
<div class="t" style="left:-139.5px;width:300px;text-align:right;top:380.55px;font-size:19.2px;color:#5c5c5c;-webkit-text-stroke:0.4px #fff">Minnesota</div>
<div class="r" style="left:167px;top:403px;width:66.4px;height:15px;background:#4e79a7"></div>
<div class="t" style="left:-139.5px;width:300px;text-align:right;top:400.55px;font-size:19.2px;color:#5c5c5c;-webkit-text-stroke:0.4px #fff">Massachusetts</div>
<div class="r" style="left:167px;top:423px;width:63.6px;height:15px;background:#4e79a7"></div>
<div class="t" style="left:-139.5px;width:300px;text-align:right;top:420.55px;font-size:19.2px;color:#5c5c5c;-webkit-text-stroke:0.4px #fff">Delaware</div>
<div class="r" style="left:167px;top:443px;width:54.7px;height:15px;background:#4e79a7"></div>
<div class="t" style="left:-139.5px;width:300px;text-align:right;top:440.55px;font-size:19.2px;color:#5c5c5c;-webkit-text-stroke:0.4px #fff">Maryland</div>
<div class="r" style="left:167px;top:463px;width:52.2px;height:15px;background:#4e79a7"></div>
<div class="t" style="left:-139.5px;width:300px;text-align:right;top:460.55px;font-size:19.2px;color:#5c5c5c;-webkit-text-stroke:0.4px #fff">Rhode Island</div>
<div class="r" style="left:167px;top:483px;width:51.2px;height:15px;background:#4e79a7"></div>
<div class="t" style="left:-139.5px;width:300px;text-align:right;top:480.55px;font-size:19.2px;color:#5c5c5c;-webkit-text-stroke:0.4px #fff">Missouri</div>
<div class="r" style="left:167px;top:503px;width:45.2px;height:15px;background:#4e79a7"></div>
<div class="t" style="left:-139.5px;width:300px;text-align:right;top:500.55px;font-size:19.2px;color:#5c5c5c;-webkit-text-stroke:0.4px #fff">Oklahoma</div>
<div class="r" style="left:167px;top:523px;width:44.8px;height:15px;background:#4e79a7"></div>
<div class="t" style="left:-139.5px;width:300px;text-align:right;top:520.55px;font-size:19.2px;color:#5c5c5c;-webkit-text-stroke:0.4px #fff">Alabama</div>
<div class="r" style="left:167px;top:543px;width:39.9px;height:15px;background:#4e79a7"></div>
<div class="t" style="left:-139.5px;width:300px;text-align:right;top:540.55px;font-size:19.2px;color:#5c5c5c;-webkit-text-stroke:0.4px #fff">Oregon</div>
<div class="r" style="left:167px;top:563px;width:38.2px;height:15px;background:#4e79a7"></div>
<div class="t" style="left:-139.5px;width:300px;text-align:right;top:560.55px;font-size:19.2px;color:#5c5c5c;-webkit-text-stroke:0.4px #fff">Nevada</div>
</div>
<div class="r" style="left:736px;top:792px;width:1139px;height:1px;background:#eeeeee"></div>
<div class="r" style="left:736px;top:792px;width:1px;height:5px;background:#eeeeee"></div>
<div class="r" style="left:783px;top:792px;width:1px;height:5px;background:#eeeeee"></div>
<div class="r" style="left:830px;top:792px;width:1px;height:5px;background:#eeeeee"></div>
<div class="r" style="left:878px;top:792px;width:1px;height:5px;background:#eeeeee"></div>
<div class="r" style="left:925px;top:792px;width:1px;height:5px;background:#eeeeee"></div>
<div class="r" style="left:972px;top:792px;width:1px;height:5px;background:#eeeeee"></div>
<div class="r" style="left:1020px;top:792px;width:1px;height:5px;background:#eeeeee"></div>
<div class="r" style="left:1067px;top:792px;width:1px;height:5px;background:#eeeeee"></div>
<div class="r" style="left:1115px;top:792px;width:1px;height:5px;background:#eeeeee"></div>
<div class="r" style="left:1162px;top:792px;width:1px;height:5px;background:#eeeeee"></div>
<div class="r" style="left:1209px;top:792px;width:1px;height:5px;background:#eeeeee"></div>
<div class="r" style="left:1257px;top:792px;width:1px;height:5px;background:#eeeeee"></div>
<div class="r" style="left:1304px;top:792px;width:1px;height:5px;background:#eeeeee"></div>
<div class="r" style="left:1352px;top:792px;width:1px;height:5px;background:#eeeeee"></div>
<div class="r" style="left:1399px;top:792px;width:1px;height:5px;background:#eeeeee"></div>
<div class="r" style="left:1446px;top:792px;width:1px;height:5px;background:#eeeeee"></div>
<div class="r" style="left:1494px;top:792px;width:1px;height:5px;background:#eeeeee"></div>
<div class="r" style="left:1541px;top:792px;width:1px;height:5px;background:#eeeeee"></div>
<div class="r" style="left:1588px;top:792px;width:1px;height:5px;background:#eeeeee"></div>
<div class="r" style="left:1636px;top:792px;width:1px;height:5px;background:#eeeeee"></div>
<div class="r" style="left:1683px;top:792px;width:1px;height:5px;background:#eeeeee"></div>
<div class="r" style="left:1731px;top:792px;width:1px;height:5px;background:#eeeeee"></div>
<div class="r" style="left:1778px;top:792px;width:1px;height:5px;background:#eeeeee"></div>
<div class="r" style="left:1825px;top:792px;width:1px;height:5px;background:#eeeeee"></div>
<div class="r" style="left:1873px;top:792px;width:1px;height:5px;background:#eeeeee"></div>
<div class="t" style="left:738.00px;top:803.56px;font-size:18px;color:#5c5c5c;font-weight:400;font-style:normal;-webkit-text-stroke:0.4px #fff;">0K</div>
<div class="t" style="left:630.84px;width:400px;text-align:center;top:803.56px;font-size:18px;color:#5c5c5c;font-weight:400;font-style:normal;-webkit-text-stroke:0.4px #fff;">40K</div>
<div class="t" style="left:725.61px;width:400px;text-align:center;top:803.56px;font-size:18px;color:#5c5c5c;font-weight:400;font-style:normal;-webkit-text-stroke:0.4px #fff;">80K</div>
<div class="t" style="left:820.37px;width:400px;text-align:center;top:803.56px;font-size:18px;color:#5c5c5c;font-weight:400;font-style:normal;-webkit-text-stroke:0.4px #fff;">120K</div>
<div class="t" style="left:915.14px;width:400px;text-align:center;top:803.56px;font-size:18px;color:#5c5c5c;font-weight:400;font-style:normal;-webkit-text-stroke:0.4px #fff;">160K</div>
<div class="t" style="left:1009.90px;width:400px;text-align:center;top:803.56px;font-size:18px;color:#5c5c5c;font-weight:400;font-style:normal;-webkit-text-stroke:0.4px #fff;">200K</div>
<div class="t" style="left:1104.66px;width:400px;text-align:center;top:803.56px;font-size:18px;color:#5c5c5c;font-weight:400;font-style:normal;-webkit-text-stroke:0.4px #fff;">240K</div>
<div class="t" style="left:1199.43px;width:400px;text-align:center;top:803.56px;font-size:18px;color:#5c5c5c;font-weight:400;font-style:normal;-webkit-text-stroke:0.4px #fff;">280K</div>
<div class="t" style="left:1294.19px;width:400px;text-align:center;top:803.56px;font-size:18px;color:#5c5c5c;font-weight:400;font-style:normal;-webkit-text-stroke:0.4px #fff;">320K</div>
<div class="t" style="left:1388.96px;width:400px;text-align:center;top:803.56px;font-size:18px;color:#5c5c5c;font-weight:400;font-style:normal;-webkit-text-stroke:0.4px #fff;">360K</div>
<div class="t" style="left:1483.72px;width:400px;text-align:center;top:803.56px;font-size:18px;color:#5c5c5c;font-weight:400;font-style:normal;-webkit-text-stroke:0.4px #fff;">400K</div>
<div class="t" style="left:1578.48px;width:400px;text-align:center;top:803.56px;font-size:18px;color:#5c5c5c;font-weight:400;font-style:normal;-webkit-text-stroke:0.4px #fff;">440K</div>
<div class="t" style="left:1471.00px;width:400px;text-align:right;top:803.56px;font-size:18px;color:#5c5c5c;font-weight:400;font-style:normal;-webkit-text-stroke:0.4px #fff;">480K</div>
<div class="t" style="left:1282.50px;top:836.52px;font-size:17.1px;color:#333;font-weight:700;font-style:normal;">Sales</div>
<div class="r" style="left:1334px;top:838px;width:10px;height:2px;background:#555"></div>
<div class="r" style="left:1334px;top:842px;width:6px;height:2px;background:#555"></div>
<div class="r" style="left:1334px;top:846px;width:3px;height:2px;background:#555"></div>
<div class="r" style="left:1879px;top:246px;width:24px;height:546px;background:#efefef"></div>
<div class="r" style="left:1879px;top:272px;width:23px;height:282px;background:#cccccc"></div>
<svg class="s" style="left:1882px;top:252px;" width="18" height="14" viewBox="0 0 18 14"><path d="M4 10.5L8.5 4.5L13 10.5" fill="none" stroke="#4a4a4a" stroke-width="2"/></svg>
<svg class="s" style="left:1882px;top:772px;" width="18" height="14" viewBox="0 0 18 14"><path d="M4 4.5L8.5 10L13 4.5" fill="none" stroke="#4a4a4a" stroke-width="2"/></svg>
<div class="r" style="left:0px;top:884px;width:1920px;height:44px;background:#e4e4e4;border-top:1px solid #c8c8c8"></div>
<div class="r" style="left:253px;top:885px;width:101px;height:43px;background:#f8f8f8"></div>
<div class="r" style="left:195px;top:885px;width:1px;height:43px;background:#c8c8c8"></div>
<div class="r" style="left:252px;top:885px;width:1px;height:43px;background:#c8c8c8"></div>
<div class="r" style="left:354px;top:885px;width:1px;height:43px;background:#c8c8c8"></div>
<div class="r" style="left:386px;top:885px;width:1px;height:43px;background:#c8c8c8"></div>
<div class="r" style="left:418px;top:885px;width:1px;height:43px;background:#c8c8c8"></div>
<div class="r" style="left:450px;top:885px;width:1px;height:43px;background:#c8c8c8"></div>
<svg class="s" style="left:10px;top:898px;" width="14" height="18" viewBox="0 0 14 18"><path d="M3.5 4C3.5 2 10.5 2 10.5 4V13C10.5 15 3.5 15 3.5 13Z M3.5 4C3.5 6 10.5 6 10.5 4" fill="none" stroke="#666" stroke-width="1.1"/></svg>
<div class="t" style="left:28.00px;top:898.62px;font-size:18.4px;color:#555;font-weight:400;font-style:normal;">Data Source</div>
<div class="t" style="left:204.50px;top:898.51px;font-size:18.3px;color:#555;font-weight:400;font-style:normal;">Map</div>
<div class="t" style="left:260.50px;top:898.79px;font-size:18.2px;color:#444;font-weight:700;font-style:normal;">Bar Chart</div>
<svg class="s" style="left:361px;top:896px;" width="22" height="22" viewBox="0 0 22 22"><path d="M10.5 14.5H4.5Q3.5 14.5 3.5 13.5V5.5Q3.5 4.5 4.5 4.5H12.5Q13.5 4.5 13.5 5.5V11" fill="none" stroke="#666" stroke-width="1.1"/><path d="M6.3 11.8V9.6M8.5 11.8V7.8M10.8 11.8V8.4" stroke="#666" stroke-width="1.1"/><path d="M10.1 14.9H17.9M14 11V18.8" stroke="#5a5a5a" stroke-width="2"/></svg>
<svg class="s" style="left:393px;top:896px;" width="22" height="22" viewBox="0 0 22 22"><path d="M10.5 14.5H4.5Q3.5 14.5 3.5 13.5V5.5Q3.5 4.5 4.5 4.5H12.5Q13.5 4.5 13.5 5.5V11M8.6 4.5V14.5M3.5 9.3H13.5" fill="none" stroke="#666" stroke-width="1.1"/><path d="M10.1 14.9H17.9M14 11V18.8" stroke="#5a5a5a" stroke-width="2"/></svg>
<svg class="s" style="left:425px;top:896px;" width="22" height="22" viewBox="0 0 22 22"><path d="M3.1 4.3V13.7L8.4 15.6V5.9Z M8.4 5.9L13.7 4.3V10" fill="none" stroke="#666" stroke-width="1.1" stroke-linejoin="round"/><path d="M10.1 14.9H17.9M14 11V18.8" stroke="#5a5a5a" stroke-width="2"/></svg>
</body></html>
